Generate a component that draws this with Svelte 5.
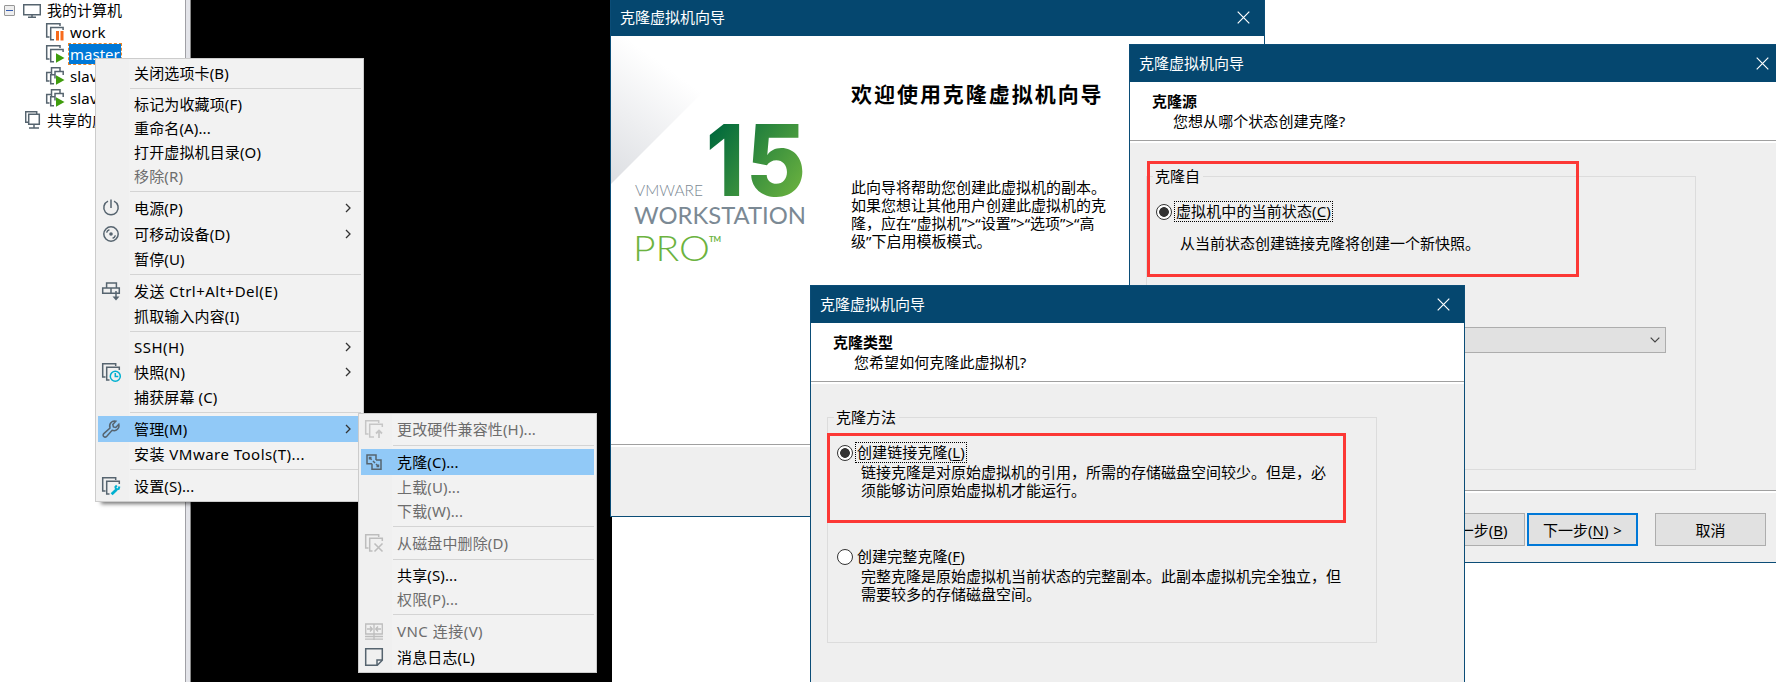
<script>
  const menu = [
    { t: '关闭选项卡(B)' }, { sep: 1 },
    { t: '标记为收藏项(F)' }, { t: '重命名(A)...' }, { t: '打开虚拟机目录(O)' }, { t: '移除(R)', off: 1 }, { sep: 1 },
    { t: '电源(P)', icon: 'power', sub: 1 }, { t: '可移动设备(D)', icon: 'disc', sub: 1 }, { t: '暂停(U)' }, { sep: 1 },
    { t: '发送 Ctrl+Alt+Del(E)', icon: 'keys', wide: 1 }, { t: '抓取输入内容(I)' }, { sep: 1 },
    { t: 'SSH(H)', sub: 1, wide: 1 }, { t: '快照(N)', icon: 'snap', sub: 1 }, { t: '捕获屏幕 (C)' }, { sep: 1 },
    { t: '管理(M)', icon: 'wrench', sub: 1, hot: 1 }, { t: '安装 VMware Tools(T)...', wide: 1 }, { sep: 1 },
    { t: '设置(S)...', icon: 'settings' }
  ];
  const submenu = [
    { t: '更改硬件兼容性(H)...', icon: 'upgrade', off: 1 }, { sep: 1 },
    { t: '克隆(C)...', icon: 'clone', hot: 1 }, { t: '上载(U)...', off: 1 }, { t: '下载(W)...', off: 1 }, { sep: 1 },
    { t: '从磁盘中删除(D)', icon: 'delete', off: 1 }, { sep: 1 },
    { t: '共享(S)...' }, { t: '权限(P)...', off: 1 }, { sep: 1 },
    { t: 'VNC 连接(V)', icon: 'vnc', off: 1, wide: 1 }, { t: '消息日志(L)', icon: 'note' }
  ];
  const tree = [
    { t: 'work', icon: 'paused' }, { t: 'master', icon: 'running', sel: 1 },
    { t: 'slave1', icon: 'linked' }, { t: 'slave2', icon: 'linked' }
  ];
</script>

{#snippet icon(name)}
  <svg class="icon" width="18" height="18" viewBox="0 0 18 18" fill="none" stroke="#56646f" stroke-width="1.5">
    {#if name === 'power'}
      <path d="M6 2.1A7.2 7.2 0 1 0 12 2.1M9 0.5V9" />
    {:else if name === 'disc'}
      <circle cx="9" cy="9" r="7.2" /><circle cx="9" cy="9" r="1.8" fill="#56646f" stroke="none" />
      <path d="M4.6 7.6Q5.2 5.400 7.400 4.800M13.400 10.400Q12.800 12.600 10.600 13.200" />
    {:else if name === 'keys'}
      <path d="M4.6 1h9.8v5H4.6zM0.7 6h16.600v5.200H0.700zM9 6v5M14 9v8" /><path d="M10.500 14.500h7L14 18.500z" fill="#56646f" stroke="none" />
    {:else if name === 'paused'}
      <path d="M3.5 14H.7V.7H14V3M8 16.7H4.7V4.5h12.4V7" />
      <path d="M11.5 8v9.5M16 8v9.5" stroke="#f76b1c" stroke-width="3" />
    {:else if name === 'running'}
      <path d="M3.5 14H.7V.7H14V3M8 16.7H4.7V4.5h12.4V7" />
      <path d="M10 8.3l8.500 4.7-8.500 4.7z" fill="#3f9c0d" stroke="none" />
    {:else if name === 'linked'}
      <path d="M3.500 14H.7V5.500H5M5.500 7V.7H14V4M8 16.700H4.700V7.700H9M9 11.500V4.400h8.200V8" />
      <path d="M10 8.3l8.500 4.7-8.500 4.7z" fill="#3f9c0d" stroke="none" />
    {:else if name === 'snap'}
      <path d="M3.5 14H.7V.7H13.7V3M7.500 17H4.7V4.3h12.6V7" />
      <circle cx="13.3" cy="13.2" r="5" stroke="#00b0d0" /><path d="M13.3 10v3.4h3" stroke="#00b0d0" />
    {:else if name === 'wrench'}
      <path d="M1.8 13.6L8 8C6.6 4 9.8.4 13.8 1.2l-3 3.2.6 2.5 2.4.5 3-3.1c1 4-2.3 7.4-6.7 6L4.8 16.2c-2.2 2.3-5-.6-3-2.6z" />
    {:else if name === 'settings'}
      <path d="M3.5 14H.7V.7H13.7V3M7.500 17H4.7V4.3h12.6V7" />
      <path d="M9.6 17.300l5-4.8" stroke="#00b0d0" stroke-width="2.800" /><path d="M17.4 9.5l-.7 2.400-2.600.500-.7-2.300 1.400-1.600" stroke="#00b0d0" stroke-width="2" />
    {:else if name === 'upgrade'}
      <g stroke="#c6c6c6"><path d="M3.5 14H.7V.7H13.7V3M9 17H4.7V4.3h12.6V7" /><path d="M14 18v-7M11 13.5l3-3 3 3" stroke-width="1.8" /></g>
    {:else if name === 'delete'}
      <g stroke="#bdbdbd"><path d="M3.5 14H.7V.7H13.7V3M7.500 17H4.7V4.3h12.6V7" /><path d="M9.5 9.5l8 8M17.5 9.5l-8 8" stroke-width="1.6" /></g>
    {:else if name === 'clone'}
      <path d="M7 10.7H2V2h9v5M7 10.700V16.200h9V7h-5M4.700 4.700l2 2M8 8l2 2M11 11l2.300 2.300M4.500 6.500V4.500h2M13.500 11.500v2h-2" />
    {:else if name === 'vnc'}
      <path d="M.7 2h16.6v10H.7zM9 2v16M0 14.500h18M0 17.200h18M2 7h5M5 4.5L7.3 7 5 9.500M16 7h-5M13 4.5L10.700 7l2.300 2.500" stroke="#bdbdbd" stroke-width="1.300" />
    {:else if name === 'note'}
      <path d="M.7.7h16.600v11.500l-5 5H.7zM17 12h-5v5" />
    {/if}
  </svg>
{/snippet}

{#snippet menuList(items)}
  {#each items as m}
    {#if m.sep}
      <div class="sep"></div>
    {:else}
      <div class="item" class:tall={m.icon} class:hot={m.hot} class:off={m.off}>
        <span class="slot">{#if m.icon}{@render icon(m.icon)}{/if}</span>
        <span class="txt" class:wide={m.wide}>{m.t}</span>
        {#if m.sub}<svg class="arrow" width="6" height="10" viewBox="0 0 6 10"><path d="M1 1l4 4-4 4" /></svg>{/if}
      </div>
    {/if}
  {/each}
{/snippet}

{#snippet titlebar()}
  <header class="bar">
    <span>克隆虚拟机向导</span>
    <svg width="13" height="13" viewBox="0 0 13 13"><path d="M.7.7l11.600 11.600M12.300.7L.7 12.300" /></svg>
  </header>
{/snippet}

<main>
  <aside class="tree">
    <div class="node root">
      <span class="toggle"></span>
      <svg width="18" height="14" viewBox="0 0 18 14" fill="none" stroke="#56646f" stroke-width="1.500"><path d="M.7.7h16.600v10H.7zM9 11v2M5 13.200h8" /></svg>
      <span class="name">我的计算机</span>
    </div>
    {#each tree as n}
      <div class="node child">{@render icon(n.icon)}<span class="name" class:sel={n.sel}>{n.t}</span></div>
    {/each}
    <div class="node shared">
      <svg width="16" height="18" viewBox="0 0 16 18" fill="none" stroke="#56646f" stroke-width="1.500"><path d="M3 11.300H.7V.7h11V3M3.700 3.300h10.600v10H3.700zM9 13.500v3M4 17h10" /></svg>
      <span class="name">共享的虚拟机</span>
    </div>
  </aside>
  <div class="split"></div>
  <div class="screen"></div>

  <section class="window first">
    {@render titlebar()}
    <div class="welcome">
      <svg class="logo" width="200" height="300" viewBox="0 0 200 300">
        <defs>
          <linearGradient id="fold" gradientUnits="userSpaceOnUse" x1="75" y1="45" x2="0" y2="148"><stop offset="0" stop-color="#fff" /><stop offset="1" stop-color="#dcdee2" /></linearGradient>
          <linearGradient id="num" gradientUnits="userSpaceOnUse" x1="100" y1="95" x2="190" y2="160"><stop offset="0" stop-color="#00693c" /><stop offset="1" stop-color="#6db33f" /></linearGradient>
        </defs>
        <path d="M0 0H148L0 148z" fill="url(#fold)" />
        <g class="num" fill="url(#num)" font-size="99" font-weight="800">
          <text x="95" y="160" textLength="38" lengthAdjust="spacingAndGlyphs">1</text>
          <text x="135" y="160" textLength="60" lengthAdjust="spacingAndGlyphs">5</text>
        </g>
        <g font-weight="300" fill="#7b8994">
          <text x="24" y="159.500" font-size="15" textLength="68" lengthAdjust="spacingAndGlyphs">VMWARE</text>
          <text x="23" y="188" font-size="23.500" font-weight="400" textLength="172" lengthAdjust="spacingAndGlyphs">WORKSTATION</text>
          <text x="22" y="225" font-size="36" fill="#6cb33f" textLength="77" lengthAdjust="spacingAndGlyphs">PRO</text>
          <text x="98" y="206" font-size="8" font-weight="700" fill="#6cb33f" textLength="12">TM</text>
        </g>
      </svg>
      <div class="intro">
        <h1>欢迎使用克隆虚拟机向导</h1>
        <p>此向导将帮助您创建此虚拟机的副本。<br />如果您想让其他用户创建此虚拟机的克<br />隆，应在“虚拟机”&gt;“设置”&gt;“选项”&gt;“高<br />级”下启用模板模式。</p>
      </div>
    </div>
    <div class="foot"></div>
  </section>

  <section class="window source">
    {@render titlebar()}
    <div class="head"><b>克隆源</b><span>您想从哪个状态创建克隆?</span></div>
    <div class="body">
      <div class="group">
        <span class="legend">克隆自</span>
        <div class="opt"><i class="radio on"></i><span class="lab focus">虚拟机中的当前状态(<u>C</u>)</span></div>
        <p class="desc">从当前状态创建链接克隆将创建一个新快照。</p>
        <div class="combo"><svg width="10" height="6" viewBox="0 0 10 6"><path d="M.7.7L5 5 9.300.7" /></svg></div>
        <div class="mark"></div>
      </div>
    </div>
    <div class="actions">
      <button>&lt; 上一步(<u>B</u>)</button>
      <button class="def">下一步(<u>N</u>) &gt;</button>
      <button class="cancel">取消</button>
    </div>
  </section>

  <section class="window kind">
    {@render titlebar()}
    <div class="head"><b>克隆类型</b><span>您希望如何克隆此虚拟机?</span></div>
    <div class="body">
      <div class="group">
        <span class="legend">克隆方法</span>
        <div class="opt"><i class="radio on"></i><span class="lab focus">创建链接克隆(<u>L</u>)</span></div>
        <p class="desc">链接克隆是对原始虚拟机的引用，所需的存储磁盘空间较少。但是，必<br />须能够访问原始虚拟机才能运行。</p>
        <div class="opt second"><i class="radio"></i><span class="lab">创建完整克隆(<u>F</u>)</span></div>
        <p class="desc">完整克隆是原始虚拟机当前状态的完整副本。此副本虚拟机完全独立，但<br />需要较多的存储磁盘空间。</p>
        <div class="mark"></div>
      </div>
    </div>
  </section>

  <nav class="menu main-menu">{@render menuList(menu)}</nav>
  <nav class="menu sub-menu">{@render menuList(submenu)}</nav>
</main>

<style>
  :global(body) { background: #fff; }
  main {
    position: relative; display: flex; width: 1776px; height: 682px; overflow: hidden;
    font: 15px/18px "Noto Sans", "Noto Sans CJK SC", sans-serif; color: #000; white-space: nowrap;
  }
  .tree { width: 185px; height: 682px; overflow: hidden; background: #fff; }
  .node { display: flex; align-items: center; height: 22px; }
  .node svg { flex: none; }
  .root { padding-left: 4px; height: 21px; }
  .root svg { margin: 0 6px 0 8px; }
  .root .name { padding-bottom: 2px; }
  .child { padding-left: 46px; }
  .shared { padding-left: 25px; }
  .shared svg { margin-right: 6px; }
  .toggle { width: 9px; height: 9px; border: 1px solid #979797; border-radius: 1px; background: linear-gradient(#0000 4px, #335bb0 4px 5px, #0000 5px) 1px 0 / 7px 9px no-repeat, #eee; }
  .child .name { margin-left: 4px; padding: 0 2px; height: 20px; line-height: 20px; letter-spacing: .15px; }
  .child .sel { margin-left: 5px; padding: 0 1px; background: #0078d7; color: #fff; outline: 1px dashed #e8872b; letter-spacing: 0; }
  .split { width: 4px; background: #e3e4e9; border-left: 1px solid #a0a0a5; border-right: 1px solid #888; height: 682px; }
  .screen { width: 421px; height: 682px; background: #000; }

  .window { position: absolute; box-sizing: border-box; width: 655px; border: 1px solid #0b4d77; background: #efefef; display: flex; flex-direction: column; }
  .first { left: 610px; top: -3px; height: 520px; }
  .source { left: 1129px; top: 44px; height: 519px; }
  .kind { left: 810px; top: 285px; height: 519px; }
  .bar { flex: none; display: flex; align-items: center; justify-content: space-between; height: 37px; padding: 0 14px 0 9px; background: #05476f; color: #fff; }
  .bar svg { fill: none; stroke: #fff; stroke-width: 1.200; }
  .bar span { padding-bottom: 2px; }
  .first .bar { height: 38px; }
  .first .bar span { padding-bottom: 0; }
  .welcome { display: flex; height: 408px; background: #fff; border-bottom: 1px solid #a0a0a0; flex: none; }
  .logo { font-family: Lato, sans-serif; flex: none; }
  .num { font-family: Inter, sans-serif; }
  .intro { padding: 43px 0 0 40px; }
  h1 { margin: 0; font: 700 21px/28px "Noto Sans CJK SC", sans-serif; letter-spacing: 1.960px; }
  .intro p { margin: 71px 0 0; }
  .foot { border-top: 2px solid #fff; flex: 1; }
  .head { flex: none; display: flex; flex-direction: column; box-sizing: border-box; height: 59px; padding: 9px 0 0 22px; background: #fff; line-height: 20px; border-bottom: 1px solid #a0a0a0; box-shadow: 0 2px #fff; }
  .head span { padding-left: 21px; letter-spacing: .06px; }
  .body { flex: none; padding: 35px 0 0 16px; }
  .group { position: relative; box-sizing: border-box; width: 550px; border: 1px solid #dcdcdc; padding-left: 9px; }
  .source .group { height: 294px; }
  .kind .group { height: 226px; }
  .legend { position: absolute; left: 6px; top: -10px; padding: 0 3px 0 2px; background: #efefef; }
  .opt { display: flex; align-items: center; margin-top: 24px; height: 21px; }
  .opt.second { margin-top: 47px; height: 21px; }
  .radio { box-sizing: border-box; width: 16px; height: 16px; border: 1.500px solid #333; border-radius: 50%; background: #fff; }
  .on { background: radial-gradient(circle, #333 4.500px, #fff 5.200px); }
  .lab { margin-left: 3px; padding: 0 1px; line-height: 19px; letter-spacing: .12px; }
  .focus { outline: 1px dotted #000; outline-offset: 0; }
  u { text-underline-offset: 2px; text-decoration-thickness: 1px; }
  .desc { margin: 0 0 0 24px; }
  .source .desc { margin-top: 12px; }
  .mark { position: absolute; left: 0; top: -16px; box-sizing: border-box; width: 432px; height: 116px; border: 3px solid #fc3835; }
  .kind .mark { left: -1px; top: 15px; width: 519px; height: 90px; }
  .combo { box-sizing: border-box; margin: 75px 29px 0 20px; height: 26px; border: 1px solid #adadad; background: #e1e1e1; display: flex; align-items: center; justify-content: flex-end; padding-right: 5px; }
  .combo svg { fill: none; stroke: #444; stroke-width: 1.200; }
  .actions { display: flex; align-items: flex-start; flex: 1; margin-top: 20px; padding: 22px 0 0 284px; border-top: 1px solid #a0a0a0; box-shadow: inset 0 2px #fff; }
  button { box-sizing: border-box; width: 111px; height: 33px; margin: 0 2px 0 0; padding: 0; border: 1px solid #adadad; background: #e1e1e1; font: inherit; color: #000; }
  .def { border: 2px solid #0078d7; word-spacing: 1px; }
  .cancel { margin-left: 15px; }

  .menu { position: absolute; box-sizing: border-box; padding: 2px; border: 1px solid #ccc; background: linear-gradient(90deg, #f0f0f0 33px, #f2f2f2 33px); box-shadow: 4px 4px 4px -2px #0008; }
  .main-menu { left: 95px; top: 58px; width: 269px; height: 444px; }
  .sub-menu { left: 358px; top: 413px; width: 239px; height: 260px; box-shadow: none; }
  .item { display: flex; align-items: center; height: 24px; }
  .tall { height: 26px; }
  .hot { background: #91c9f7; }
  .off { color: #6d6d6d; }
  .slot { width: 36px; padding-left: 4px; box-sizing: border-box; display: flex; }
  .txt { flex: 1; letter-spacing: .14px; }
  .wide { letter-spacing: .48px; }
  .arrow { margin-right: 10px; fill: none; stroke: #333; stroke-width: 1.300; }
  .sep { height: 1px; margin: 3px 0 3px 32px; background: #d4d4d4; }
  .icon { flex: none; overflow: visible; }
</style>
